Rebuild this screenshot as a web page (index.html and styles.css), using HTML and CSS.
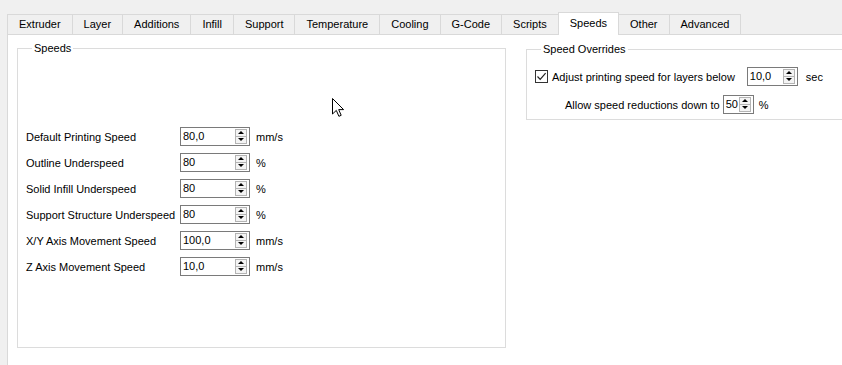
FILE: index.html
```html
<!DOCTYPE html>
<html lang="en">
<head>
    <meta charset="UTF-8">
    <title>Printer Settings - Speeds</title>
    <link rel="stylesheet" href="styles.css">
</head>
<body>
    <div class="tabs">
        <div class="tab">Extruder</div>
        <div class="tab">Layer</div>
        <div class="tab">Additions</div>
        <div class="tab">Infill</div>
        <div class="tab">Support</div>
        <div class="tab">Temperature</div>
        <div class="tab">Cooling</div>
        <div class="tab">G-Code</div>
        <div class="tab">Scripts</div>
        <div class="tab active">Speeds</div>
        <div class="tab">Other</div>
        <div class="tab">Advanced</div>
    </div>

    <div class="pane">
        <fieldset class="group speeds">
            <legend>Speeds</legend>
            <div class="form">
                <label>Default Printing Speed</label>
                <div class="spin"><span class="val">80,0</span><span class="arrows"><i class="up"></i><i class="down"></i></span></div>
                <span class="unit">mm/s</span>

                <label>Outline Underspeed</label>
                <div class="spin"><span class="val">80</span><span class="arrows"><i class="up"></i><i class="down"></i></span></div>
                <span class="unit">%</span>

                <label>Solid Infill Underspeed</label>
                <div class="spin"><span class="val">80</span><span class="arrows"><i class="up"></i><i class="down"></i></span></div>
                <span class="unit">%</span>

                <label>Support Structure Underspeed</label>
                <div class="spin"><span class="val">80</span><span class="arrows"><i class="up"></i><i class="down"></i></span></div>
                <span class="unit">%</span>

                <label>X/Y Axis Movement Speed</label>
                <div class="spin"><span class="val">100,0</span><span class="arrows"><i class="up"></i><i class="down"></i></span></div>
                <span class="unit">mm/s</span>

                <label>Z Axis Movement Speed</label>
                <div class="spin"><span class="val">10,0</span><span class="arrows"><i class="up"></i><i class="down"></i></span></div>
                <span class="unit">mm/s</span>
            </div>
        </fieldset>

        <fieldset class="group overrides">
            <legend>Speed Overrides</legend>
            <div class="line">
                <span class="check">
                    <svg width="11" height="11" viewBox="0 0 11 11"><path d="M1.5 5.5 L4.2 8.3 L9.6 2.2" fill="none" stroke="#222" stroke-width="1.2"/></svg>
                </span>
                <span class="text">Adjust printing speed for layers below</span>
                <div class="spin sec"><span class="val">10,0</span><span class="arrows"><i class="up"></i><i class="down"></i></span></div>
                <span class="unit">sec</span>
            </div>
            <div class="line sub">
                <span class="text">Allow speed reductions down to</span>
                <div class="spin pct"><span class="val">50</span><span class="arrows"><i class="up"></i><i class="down"></i></span></div>
                <span class="unit">%</span>
            </div>
        </fieldset>

        <!-- mouse pointer -->
        <svg class="cursor" width="13" height="20" viewBox="0 0 13 20">
            <path d="M0.5 0.5 L0.5 16 L4.3 12.4 L6.9 18.3 L9.2 17.3 L6.7 11.6 L11.6 11.6 Z" fill="#fff" stroke="#000" stroke-width="1"/>
        </svg>
    </div>
</body>
</html>
```

FILE: styles.css
```css
html, body {
    margin: 0;
    height: 100%;
    overflow: hidden;
}
body {
    display: flex;
    flex-direction: column;
    background-color: #f0f0f0;
    font-family: "Liberation Sans", Arial, sans-serif;
    font-size: 11px;
    color: #000;
    white-space: nowrap;
}

/* tab bar */
.tabs {
    display: flex;
    align-items: flex-end;
    padding: 12px 0 0 7px;
}
.tab {
    height: 19px;
    line-height: 18px;
    padding: 0 11px;
    border: 1px solid #d9d9d9;
    border-right: none;
    border-bottom: none;
    background-color: #f0f0f0;
}
.tab:last-child {
    border-right: 1px solid #d9d9d9;
}
.tab.active {
    height: 22px;
    line-height: 20px;
    background-color: #fff;
    border-right: 1px solid #d9d9d9;
    margin-bottom: -1px;
    position: relative;
    z-index: 1;
}
.tab.active + .tab {
    border-left: none;
}

/* page */
.pane {
    position: relative;
    flex: 1;
    display: flex;
    align-items: flex-start;
    gap: 20px;
    margin-left: 7px;
    padding: 5px 0 0 9px;
    border: 1px solid #d9d9d9;
    border-right: none;
    border-bottom: none;
    background-color: #fff;
}

.group {
    margin: 0;
    border: 1px solid #dcdcdc;
    flex: none;
}
.group legend {
    padding: 0 2px;
    margin-left: 6px;
    line-height: 16px;
}
.speeds {
    width: 489px;
    box-sizing: border-box;
    padding: 71px 0 71px 8px;
}
.overrides {
    width: 340px;
    box-sizing: border-box;
    margin-top: 1px;
    padding: 10px 0 5px 8px;
}

/* left form grid */
.form {
    display: grid;
    grid-template-columns: 148px 70px auto;
    grid-auto-rows: 19px;
    row-gap: 7px;
    column-gap: 6px;
    align-items: center;
}

/* spin boxes */
.spin {
    display: flex;
    height: 19px;
    box-sizing: border-box;
    border: 1px solid #7a7a7a;
    background-color: #fff;
}
.spin .val {
    flex: 1;
    padding-left: 2px;
    line-height: 17px;
}
.arrows {
    display: flex;
    flex-direction: column;
    width: 12px;
    margin: 1px 2px 1px 0;
}
.arrows i {
    flex: 1;
    position: relative;
    border: 1px solid #b4b4b4;
    background-color: #f4f4f4;
}
.arrows i + i {
    border-top: none;
}
.arrows i::after {
    content: "";
    position: absolute;
    left: 2px;
    border-left: 3px solid transparent;
    border-right: 3px solid transparent;
}
.arrows .up::after {
    top: 1px;
    border-bottom: 3px solid #000;
}
.arrows .down::after {
    top: 1px;
    border-top: 3px solid #000;
}
.spin.sec {
    width: 51px;
    margin-left: 12px;
}
.spin.pct {
    width: 31px;
    margin-left: 3px;
}

/* right group rows */
.line {
    display: flex;
    align-items: center;
    height: 19px;
}
.line + .line {
    margin-top: 9px;
}
.line .unit {
    margin-left: 8px;
}
.line.sub {
    padding-left: 30px;
}
.line.sub .unit {
    margin-left: 5px;
}
.check {
    display: flex;
    align-items: center;
    justify-content: center;
    width: 13px;
    height: 13px;
    box-sizing: border-box;
    border: 1px solid #333;
    margin-right: 4px;
}

.cursor {
    position: absolute;
    left: 324px;
    top: 63px;
}
```
